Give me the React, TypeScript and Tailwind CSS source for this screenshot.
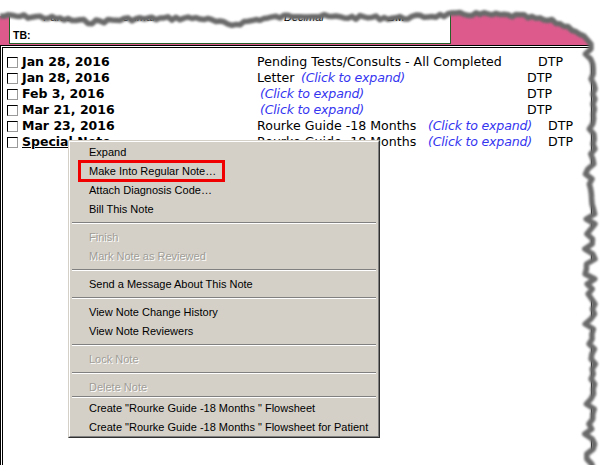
import React from 'react';

type NoteRow = {
  date: string;
  special?: boolean;
  kind: 'plain' | 'letter' | 'click' | 'rourke';
  text?: string;
  descCls: string;
};

const ROWS: NoteRow[] = [
  { date: 'Jan 28, 2016', kind: 'plain', text: 'Pending Tests/Consults - All Completed', descCls: 'w-[281px]' },
  { date: 'Jan 28, 2016', kind: 'letter', descCls: 'w-[270px]' },
  { date: 'Feb 3, 2016', kind: 'click', descCls: 'w-[270px]' },
  { date: 'Mar 21, 2016', kind: 'click', descCls: 'w-[270px]' },
  { date: 'Mar 23, 2016', kind: 'rourke', descCls: 'w-[291px]' },
  { date: 'Special Note', special: true, kind: 'rourke', descCls: 'w-[291px]' },
];

type MenuEntry = { label: string; disabled?: boolean } | 'sep' | 'line';

const MENU: MenuEntry[] = [
  { label: 'Expand' },
  { label: 'Make Into Regular Note…' },
  { label: 'Attach Diagnosis Code…' },
  { label: 'Bill This Note' },
  'sep',
  { label: 'Finish', disabled: true },
  { label: 'Mark Note as Reviewed', disabled: true },
  'sep',
  { label: 'Send a Message About This Note' },
  'sep',
  { label: 'View Note Change History' },
  { label: 'View Note Reviewers' },
  'sep',
  { label: 'Lock Note', disabled: true },
  'sep',
  { label: 'Delete Note', disabled: true },
  'line',
  { label: 'Create "Rourke Guide -18 Months " Flowsheet' },
  { label: 'Create "Rourke Guide -18 Months " Flowsheet for Patient' },
];

const ClickToExpand = () => (
  <span className="italic text-[#3535f0] tracking-[-0.2px]">(Click to expand)</span>
);

function seeded(seed: number) {
  let s = seed;
  return () => {
    s = (s * 9301 + 49297) % 233280;
    return s / 233280;
  };
}

// torn paper edge along the top and right side
function TornEdge() {
  const r = seeded(7);
  const keys: [number, number][] = [
    [0, 16], [40, 17], [90, 22], [130, 19], [200, 18], [230, 25], [260, 19], [300, 15],
    [330, 17], [400, 18], [430, 16], [470, 14], [520, 16], [555, 22], [575, 30], [588, 40],
  ];
  const baseY = (x: number) => {
    for (let i = 0; i < keys.length - 1; i++) {
      const [x0, y0] = keys[i];
      const [x1, y1] = keys[i + 1];
      if (x >= x0 && x <= x1) return y0 + ((x - x0) / (x1 - x0)) * (y1 - y0);
    }
    return keys[keys.length - 1][1];
  };
  const top: [number, number][] = [];
  for (let x = 0; x <= 584; x += 4) top.push([x, baseY(x) + (r() - 0.5) * 4]);
  const right: [number, number][] = [];
  for (let y = 44; y <= 470; y += 5) {
    const spike = r() < 0.25 ? -6 : 0;
    right.push([593 + (r() - 0.5) * 5 + spike, y]);
  }
  const edge = [...top, ...right];
  const poly = [
    [612, 0],
    [612, 470],
    ...[...right].reverse(),
    ...[...top].reverse(),
    [0, 0],
  ]
    .map((p) => p.join(','))
    .join(' ');
  return (
    <svg className="absolute left-0 top-0 pointer-events-none" width={612} height={465}>
      <defs>
        <filter id="blur" x="-5%" y="-5%" width="110%" height="110%">
          <feGaussianBlur stdDeviation="1.3" />
        </filter>
      </defs>
      <polygon points={poly} fill="#ffffff" />
      <polyline
        points={edge.map((p) => p.join(',')).join(' ')}
        fill="none"
        stroke="#6a6a6a"
        strokeWidth={5.5}
        strokeLinejoin="round"
        filter="url(#blur)"
      />
    </svg>
  );
}

export default function App() {
  return (
    <div className="relative w-[612px] h-[465px] overflow-hidden bg-white font-['DejaVu_Sans',sans-serif] text-black">
      {/* header strip */}
      <div className="h-[45px] bg-[#dc5b8c] pl-[9px]">
        <div className="w-[442px] h-[44px] bg-white border-x border-b border-[#24622a] font-['Liberation_Sans',sans-serif] text-[11px]">
          <div className="flex h-[26px] items-end leading-none pb-[3px]">
            <span className="ml-[33px] w-[72px]">Parasitolos</span>
            <span className="italic w-[97px]">Decimal</span>
            <span className="font-bold w-[72px]">F/u S</span>
            <span className="italic w-[103px]">Decimal</span>
            <span className="font-bold">BM</span>
          </div>
          <div className="mt-[4px] pl-[3px] font-bold text-[10.5px] leading-none">TB:</div>
        </div>
      </div>

      {/* notes panel */}
      <div className="w-[594px] h-[430px] border-[3px] border-double border-black pt-[6px] text-[12.6px]">
        {ROWS.map((row, i) => (
          <div key={i} className="flex h-4 items-center whitespace-nowrap">
            <span className="ml-[4px] w-[11px] h-[11px] shrink-0 border border-t-black border-l-black border-r-[#9a9a9a] border-b-[#9a9a9a] bg-white" />
            <span className={`ml-[4px] w-[235px] font-bold text-[12.5px] ${row.special ? 'underline' : ''}`}>{row.date}</span>
            <span className={row.descCls}>
              {row.kind === 'plain' && row.text}
              {row.kind === 'letter' && (
                <>
                  <span className="inline-block w-[44px]">Letter</span>
                  <ClickToExpand />
                </>
              )}
              {row.kind === 'click' && (
                <span className="pl-[3px]">
                  <ClickToExpand />
                </span>
              )}
              {row.kind === 'rourke' && (
                <>
                  <span className="inline-block w-[171px]">Rourke Guide -18 Months</span>
                  <ClickToExpand />
                </>
              )}
            </span>
            <span>DTP</span>
          </div>
        ))}
      </div>

      {/* context menu */}
      <div className="absolute left-[68px] top-[140px] w-[312px] border border-t-[#d4d0c8] border-l-[#d4d0c8] border-r-[#303030] border-b-[#303030] bg-[#d4d0c8]">
        <div className="border border-t-white border-l-white border-r-[#808080] border-b-[#808080] font-['Liberation_Sans',sans-serif] text-[11px]">
          {MENU.map((m, i) => {
            if (m === 'sep')
              return (
                <div key={i} className="h-[9px] flex items-center px-[2px]">
                  <div className="w-full border-t border-b border-t-[#808080] border-b-white" />
                </div>
              );
            if (m === 'line')
              return (
                <div key={i} className="mx-[2px] border-t border-b border-t-[#808080] border-b-white" />
              );
            return (
              <div
                key={i}
                className={`h-[19px] flex items-center pl-[19px] pt-[2px] whitespace-nowrap ${
                  m.disabled ? 'text-[#a09d97] [text-shadow:1px_1px_0_#ffffff]' : 'text-black'
                }`}
              >
                {m.label}
              </div>
            );
          })}
        </div>
      </div>

      {/* highlight box */}
      <div className="absolute left-[78px] top-[160px] w-[147px] h-[22px] border-[3px] border-[#f00000]" />

      <TornEdge />
    </div>
  );
}
